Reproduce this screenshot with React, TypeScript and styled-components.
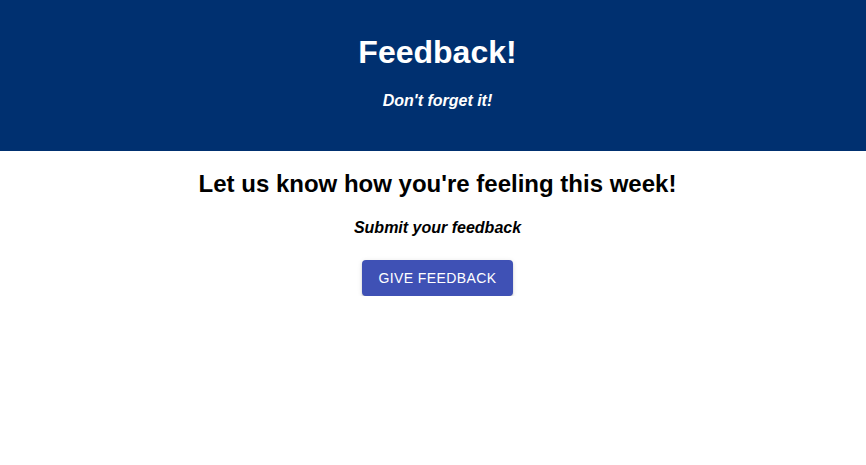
import React from "react";
import styled, { createGlobalStyle } from "styled-components";

const GlobalStyle = createGlobalStyle`
  html, body { margin: 0; padding: 0; background: #ffffff; }
  body { font-family: "Liberation Sans", Arial, Helvetica, sans-serif; }
`;

const Header = styled.header`
  background: #003070;
  color: #ffffff;
  display: flex;
  flex-direction: column;
  align-items: center;
  padding: 34px 0 41px 9px;
`;

const Title = styled.h1`
  margin: 0;
  font-size: 32px;
  font-weight: 700;
  line-height: 37px;
`;

const Tagline = styled.p`
  margin: 20px 0 0;
  font-size: 16px;
  font-weight: 700;
  font-style: italic;
  line-height: 19px;
`;

const Main = styled.main`
  display: flex;
  flex-direction: column;
  align-items: center;
  padding: 19px 0 0 9px;
  color: #000000;
`;

const Heading = styled.h2`
  margin: 0;
  font-size: 24px;
  font-weight: 700;
  line-height: 28px;
`;

const Prompt = styled.p`
  margin: 20px 0 0;
  font-size: 16px;
  font-weight: 700;
  font-style: italic;
  line-height: 19px;
`;

const Button = styled.button`
  margin-top: 23px;
  height: 36px;
  padding: 0 16px;
  border: none;
  border-radius: 4px;
  background: #3f51b5;
  color: #ffffff;
  font-family: "Liberation Sans", Arial, Helvetica, sans-serif;
  font-size: 14px;
  font-weight: 500;
  letter-spacing: 0.4px;
  text-transform: uppercase;
  cursor: pointer;
  box-shadow: 0px 3px 1px -2px rgba(0, 0, 0, 0.2), 0px 2px 2px 0px rgba(0, 0, 0, 0.14),
    0px 1px 5px 0px rgba(0, 0, 0, 0.12);
`;

export default function App() {
  return (
    <>
      <GlobalStyle />
      <Header>
        <Title>Feedback!</Title>
        <Tagline>Don't forget it!</Tagline>
      </Header>
      <Main>
        <Heading>Let us know how you're feeling this week!</Heading>
        <Prompt>Submit your feedback</Prompt>
        <Button>Give Feedback</Button>
      </Main>
    </>
  );
}
